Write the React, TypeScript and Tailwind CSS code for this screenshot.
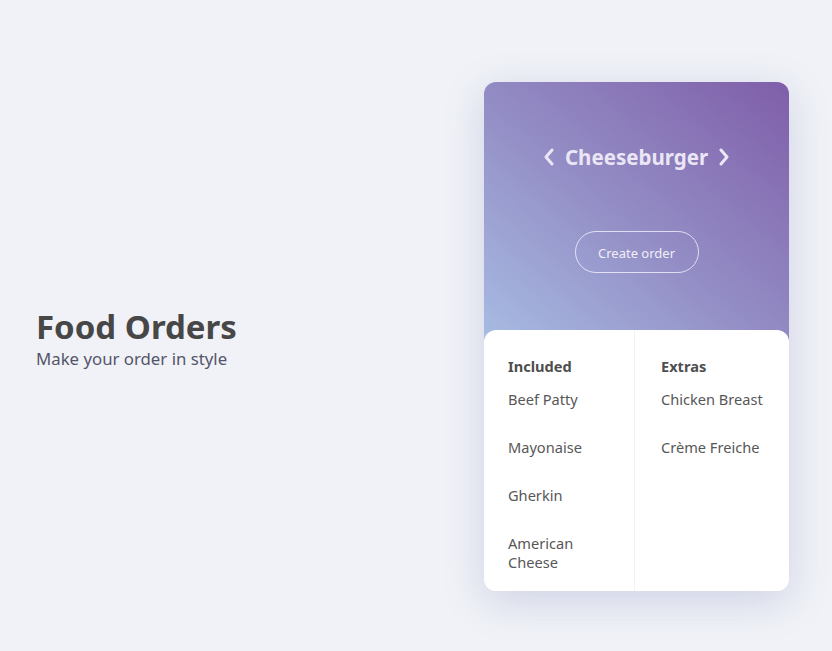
import React from "react";

function Chevron({ dir }: { dir: "left" | "right" }) {
  return (
    <svg width="12" height="18" viewBox="0 0 12 18" fill="none">
      <polyline
        points={dir === "left" ? "9,2 3,9 9,16" : "3,2 9,9 3,16"}
        stroke="#ebe6f5"
        strokeWidth="3"
        strokeLinecap="round"
        strokeLinejoin="round"
      />
    </svg>
  );
}

export default function App() {
  const font = { fontFamily: '"Noto Sans", "Open Sans", sans-serif' };
  const included = ["Beef Patty", "Mayonaise", "Gherkin", "American Cheese"];
  const extras = ["Chicken Breast", "Crème Freiche"];
  return (
    <div className="w-[832px] h-[651px] bg-[#f0f2f7] flex items-start overflow-hidden" style={font}>
      <div className="w-[484px] pl-[36px] pt-[306px]">
        <h1 className="text-[33px] leading-[42px] font-bold text-[#474747]">Food Orders</h1>
        <p className="text-[16.8px] leading-[22px] text-[#55556a] mt-0">Make your order in style</p>
      </div>
      <div className="mt-[82px] w-[305px] rounded-xl shadow-[0_10px_40px_rgba(90,100,170,0.22)] flex flex-col">
        <div className="h-[258px] rounded-t-xl bg-[linear-gradient(to_top_right,#a7bbe2_0%,#948fc6_45%,#7f5ea9_100%)] flex flex-col items-center">
          <div className="mt-[61px] flex items-center gap-[10px] text-[#ebe6f5]">
            <Chevron dir="left" />
            <span className="text-[20.5px] font-bold leading-[28px]">Cheeseburger</span>
            <Chevron dir="right" />
          </div>
          <button className="mt-[60px] w-[124px] h-[42px] rounded-full border border-white/70 text-[13px] leading-[40px] pt-[1px] text-[#f1eef8]">
            Create order
          </button>
        </div>
        <div className="-mt-[10px] bg-white rounded-xl grid grid-cols-[151px_154px] text-[#575757]">
          <div className="pl-[24px] pr-[24px] pt-[26px] pb-[19px] border-r border-[#f1f2f5]">
            <div className="text-[14.6px] leading-5 font-bold text-[#4e4e4e]">Included</div>
            <div className="mt-[14px] flex flex-col gap-[29px]">
              {included.map((i) => (
                <div key={i} className="text-[14.6px] leading-[19px]">{i}</div>
              ))}
            </div>
          </div>
          <div className="pl-[26px] pr-[10px] pt-[26px] pb-[19px]">
            <div className="text-[14.6px] leading-5 font-bold text-[#4e4e4e]">Extras</div>
            <div className="mt-[14px] flex flex-col gap-[29px]">
              {extras.map((i) => (
                <div key={i} className="text-[14.6px] leading-[19px] whitespace-nowrap">{i}</div>
              ))}
            </div>
          </div>
        </div>
      </div>
    </div>
  );
}
